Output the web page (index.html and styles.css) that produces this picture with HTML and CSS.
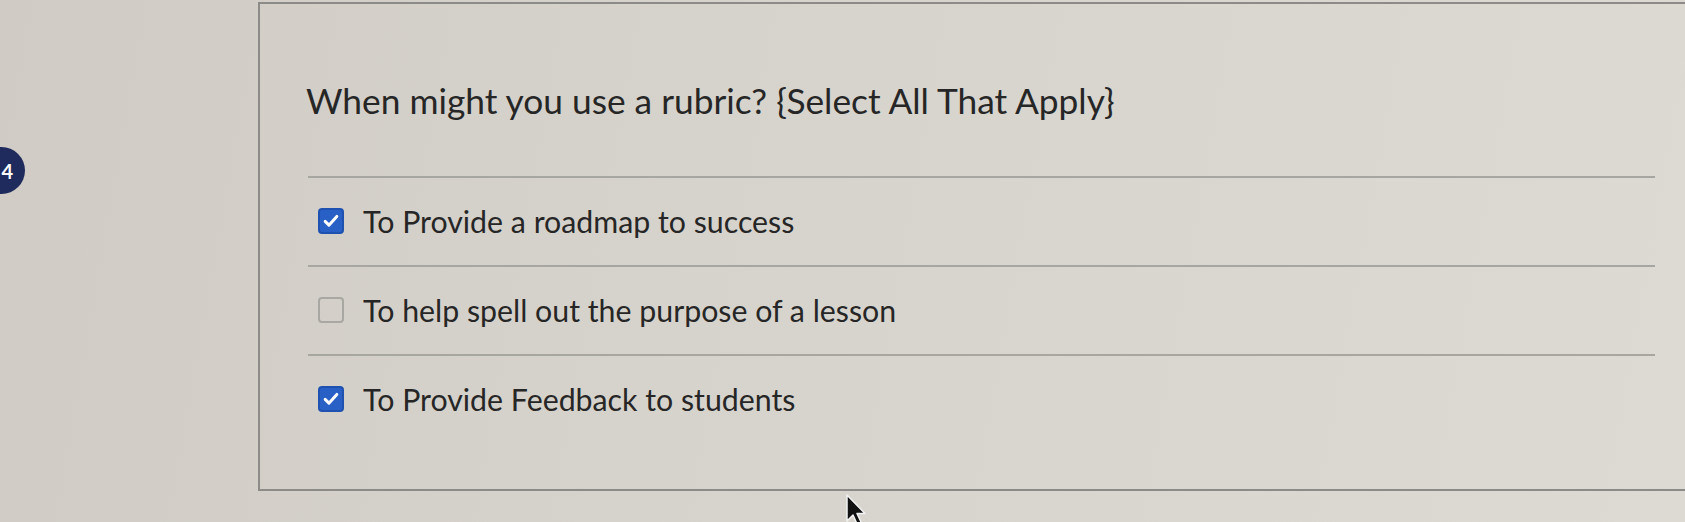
FILE: index.html
```html
<!DOCTYPE html>
<html lang="en">
<head>
<meta charset="utf-8">
<title>Quiz question</title>
<link rel="stylesheet" href="styles.css">
</head>
<body>
<div class="page">
  <aside class="rail">
    <div class="badge">4</div>
  </aside>
  <section class="card">
    <div class="question">When might you use a rubric? {Select All That Apply}</div>
    <div class="answers">
      <label class="answer">
        <span class="box checked"><svg viewBox="0 0 24 24" width="20" height="20"><path d="M5 12.5l4.5 4.5L19 6.5" fill="none" stroke="#fff" stroke-width="3.6" stroke-linecap="round" stroke-linejoin="round"/></svg></span>
        <span class="text">To Provide a roadmap to success</span>
      </label>
      <label class="answer">
        <span class="box"></span>
        <span class="text">To help spell out the purpose of a lesson</span>
      </label>
      <label class="answer">
        <span class="box checked"><svg viewBox="0 0 24 24" width="20" height="20"><path d="M5 12.5l4.5 4.5L19 6.5" fill="none" stroke="#fff" stroke-width="3.6" stroke-linecap="round" stroke-linejoin="round"/></svg></span>
        <span class="text">To Provide Feedback to students</span>
      </label>
    </div>
  </section>
</div>
<svg class="cursor" width="26" height="34" viewBox="0 0 26 34"><path d="M2 1 L2 27 L8 21 L12.5 31 L16.5 29 L12 19.5 L20 19.5 Z" fill="#111" stroke="#f2f2f2" stroke-width="1.5" stroke-linejoin="round"/></svg>
</body>
</html>
```

FILE: styles.css
```css
html, body {
  margin: 0;
  padding: 0;
  width: 1685px;
  height: 522px;
  overflow: hidden;
}
body {
  background: linear-gradient(100deg, #d0ccc5 0%, #d6d3cc 40%, #dddad4 100%);
  font-family: Lato, "Noto Sans", "Liberation Sans", sans-serif;
  color: #2b2b2b;
  position: relative;
}
.page {
  display: flex;
  height: 522px;
  padding-top: 2px;
  box-sizing: border-box;
}
.rail {
  width: 258px;
  flex: none;
  padding-top: 145px;
  overflow: hidden;
}
.badge {
  width: 47px;
  height: 47px;
  border-radius: 50%;
  background: #1f2b5c;
  color: #fff;
  margin-left: -22px;
  display: flex;
  align-items: center;
  justify-content: flex-end;
  padding-right: 12px;
  box-sizing: border-box;
  font-size: 20px;
  font-weight: 700;
}
.card {
  flex: 1;
  height: 489px;
  box-sizing: border-box;
  border: 2px solid #8d8b87;
  border-right: none;
  padding: 77px 30px 0 46px;
}
.question {
  font-size: 35.3px;
  line-height: 40px;
  color: #262626;
}
.answers {
  margin-top: 55px;
  margin-left: 2px;
}
.answer {
  display: flex;
  align-items: flex-start;
  height: 89px;
  box-sizing: border-box;
  border-top: 2px solid #a8a6a1;
  padding: 29px 0 0 10px;
}
.box {
  width: 26px;
  height: 26px;
  margin-top: 1px;
  border-radius: 4px;
  box-sizing: border-box;
  border: 2px solid #a9a7a2;
  background: transparent;
  flex: none;
  display: flex;
  align-items: center;
  justify-content: center;
}
.box.checked {
  background: #2860c6;
  border-color: #1f52b0;
}
.text {
  margin-left: 19px;
  font-size: 30.3px;
  line-height: 28px;
  color: #262626;
}
.cursor {
  position: absolute;
  left: 845px;
  top: 494px;
}
```
